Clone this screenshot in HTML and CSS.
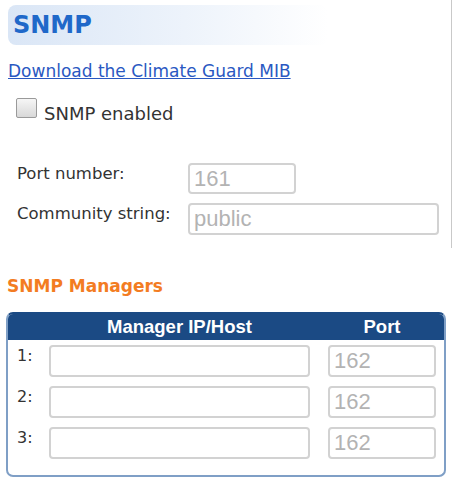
FILE: index.html
```html
<!DOCTYPE html>
<html lang="en">
<head>
    <meta charset="UTF-8">
    <title>SNMP</title>
    <link rel="stylesheet" href="styles.css">
</head>
<body>

    <div class="top">
        <h1 class="title">SNMP</h1>
        <a href="#" class="mib-link">Download the Climate Guard MIB</a>

        <label class="check-row">
            <input type="checkbox" class="check">
            <span>SNMP enabled</span>
        </label>

        <div class="fields">
            <div class="field">
                <span class="field-label">Port number:</span>
                <input type="text" class="input-field port" value="161" readonly>
            </div>
            <div class="field">
                <span class="field-label">Community string:</span>
                <input type="text" class="input-field community" value="public" readonly>
            </div>
        </div>
    </div>

    <h2 class="managers-title">SNMP Managers</h2>

    <div class="managers">
        <div class="managers-head">
            <span></span>
            <span class="head-host">Manager IP/Host</span>
            <span class="head-port">Port</span>
        </div>
        <div class="managers-body">
            <span class="row-num">1:</span>
            <input type="text" class="input-field host">
            <input type="text" class="input-field mport" value="162" readonly>

            <span class="row-num">2:</span>
            <input type="text" class="input-field host">
            <input type="text" class="input-field mport" value="162" readonly>

            <span class="row-num">3:</span>
            <input type="text" class="input-field host">
            <input type="text" class="input-field mport" value="162" readonly>
        </div>
    </div>

</body>
</html>
```

FILE: styles.css
```css
* {
    margin: 0;
    padding: 0;
    box-sizing: border-box;
}
body {
    font-family: 'DejaVu Sans', Verdana, sans-serif;
    color: #333;
    background: #fff;
}
.top {
    width: 452px;
    height: 248px;
    padding-top: 5px;
    border-right: 1px solid #c9c9c9;
}
.title {
    width: 320px;
    height: 40px;
    margin-left: 8px;
    padding-left: 5px;
    border-radius: 8px;
    background: linear-gradient(to right, #dae6f6, #edf3fb 55%, rgba(255, 255, 255, 0));
    color: #1f68c9;
    font-size: 24px;
    font-weight: bold;
    line-height: 40px;
}
.mib-link {
    display: inline-block;
    margin: 16px 0 0 8px;
    font-size: 17px;
    line-height: 20px;
    color: #2a58c2;
}
.check-row {
    display: flex;
    align-items: flex-start;
    gap: 7px;
    height: 20px;
    margin: 17px 0 0 16px;
    font-size: 18px;
    line-height: 20px;
}
.check-row span {
    margin-top: 6px;
}
.check {
    appearance: none;
    width: 21px;
    height: 20px;
    border: 1px solid #9a9a9a;
    border-radius: 2px;
    background: linear-gradient(#f6f6f6, #d8d8d8);
}
.fields {
    display: flex;
    flex-direction: column;
    gap: 9px;
    margin: 45px 0 0 17px;
}
.field {
    display: flex;
    align-items: flex-start;
}
.field-label {
    width: 171px;
    margin-top: 1px;
    font-size: 16.5px;
    line-height: 20px;
}
.input-field {
    height: 32px;
    padding: 0 4px;
    border: 2px solid #d2d2d2;
    border-radius: 4px;
    background: #fff;
    color: #b3b3b3;
    font-family: 'Liberation Sans', Arial, sans-serif;
    font-size: 22px;
    outline: none;
}
.port {
    width: 108px;
    height: 31px;
}
.community {
    width: 251px;
}
.managers-title {
    margin: 28px 0 0 7px;
    color: #f37c22;
    font-size: 17px;
    line-height: 20px;
}
.managers {
    width: 440px;
    height: 165px;
    margin: 16px 0 0 6px;
    border: 2px solid #7f9fc6;
    border-top-color: #1b4a84;
    border-radius: 7px;
    overflow: hidden;
}
.managers-head,
.managers-body {
    display: grid;
    grid-template-columns: 32px 279px 108px;
    padding-left: 9px;
}
.managers-head {
    height: 26px;
    background: #1b4a84;
    color: #fff;
    font-family: 'Liberation Sans', Arial, sans-serif;
    font-size: 18.5px;
    font-weight: bold;
    line-height: 26px;
    text-align: center;
}
.head-host {
    width: 261px;
}
.managers-body {
    row-gap: 9px;
    padding-top: 5px;
}
.managers-body .row-num {
    font-size: 16px;
    line-height: 20px;
    margin-top: 1px;
}
.host {
    width: 261px;
}
.mport {
    width: 108px;
}
```
